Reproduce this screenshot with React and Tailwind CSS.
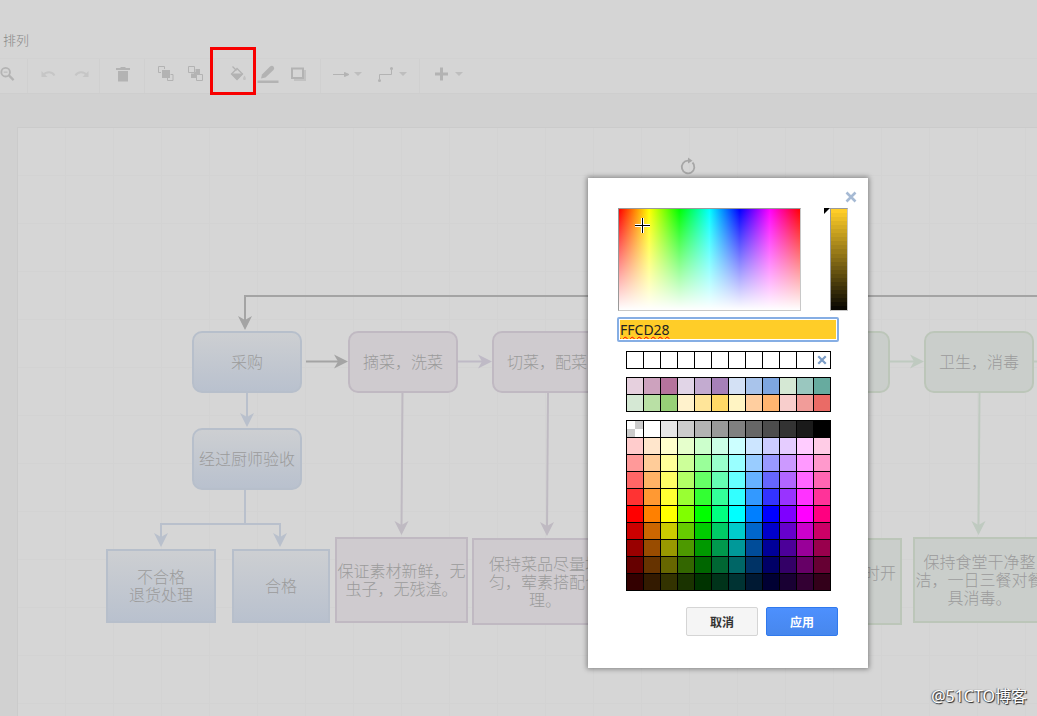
import React, { useState } from "react";

/* ---------------- DATA ---------------- */

const PRESETS = [
  "E6D0DE", "CDA2BE", "B5739D", "E1D5E7", "C3ABD0", "A680B8", "D4E1F5", "A9C4EB", "7EA6E0", "D5E8D4", "9AC7BF", "67AB9F",
  "D5E8D4", "B9E0A5", "97D077", "FFF2CC", "FFE599", "FFD966", "FFF4C3", "FFCE9F", "FFB570", "F8CECC", "F19C99", "EA6B66",
];

const PALETTE = [
  "none", "FFFFFF", "E6E6E6", "CCCCCC", "B3B3B3", "999999", "808080", "666666", "4D4D4D", "333333", "1A1A1A", "000000",
  "FFCCCC", "FFE6CC", "FFFFCC", "E6FFCC", "CCFFCC", "CCFFE6", "CCFFFF", "CCE5FF", "CCCCFF", "E5CCFF", "FFCCFF", "FFCCE6",
  "FF9999", "FFCC99", "FFFF99", "CCFF99", "99FF99", "99FFCC", "99FFFF", "99CCFF", "9999FF", "CC99FF", "FF99FF", "FF99CC",
  "FF6666", "FFB366", "FFFF66", "B3FF66", "66FF66", "66FFB3", "66FFFF", "66B2FF", "6666FF", "B266FF", "FF66FF", "FF66B3",
  "FF3333", "FF9933", "FFFF33", "99FF33", "33FF33", "33FF99", "33FFFF", "3399FF", "3333FF", "9933FF", "FF33FF", "FF3399",
  "FF0000", "FF8000", "FFFF00", "80FF00", "00FF00", "00FF80", "00FFFF", "007FFF", "0000FF", "7F00FF", "FF00FF", "FF0080",
  "CC0000", "CC6600", "CCCC00", "66CC00", "00CC00", "00CC66", "00CCCC", "0066CC", "0000CC", "6600CC", "CC00CC", "CC0066",
  "990000", "994C00", "999900", "4D9900", "009900", "00994D", "009999", "004C99", "000099", "4C0099", "990099", "99004D",
  "660000", "663300", "666600", "336600", "006600", "006633", "006666", "003366", "000066", "330066", "660066", "660033",
  "330000", "331A00", "333300", "1A3300", "003300", "00331A", "003333", "001933", "000033", "190033", "330033", "33001A",
];

const blue = "border-[#b7bfcb] bg-linear-to-b from-[#cdcfd2] to-[#b9c1ce]";
const purple = "border-[#c0b9c2] bg-[#cfcbcf]";
const green = "border-[#bcc6b9] bg-[#cacecb]";

// x / y are measured from the corner of the drawing sheet
const NODES = [
  { x: 174, y: 203, w: 110, h: 62, round: true, tone: blue, lines: ["采购"] },
  { x: 174, y: 300, w: 110, h: 62, round: true, tone: blue, lines: ["经过厨师验收"] },
  { x: 330, y: 203, w: 110, h: 62, round: true, tone: purple, lines: ["摘菜，洗菜"] },
  { x: 474, y: 203, w: 110, h: 62, round: true, tone: purple, lines: ["切菜，配菜"] },
  { x: 762, y: 203, w: 110, h: 62, round: true, tone: green, lines: [] },
  { x: 906, y: 203, w: 110, h: 62, round: true, tone: green, lines: ["卫生，消毒"] },
  { x: 88, y: 421, w: 110, h: 74, tone: blue, lines: ["不合格", "退货处理"] },
  { x: 214, y: 421, w: 98, h: 74, tone: blue, lines: ["合格"] },
  { x: 317, y: 409, w: 133, h: 86, tone: purple, lines: ["保证素材新鲜，无", "虫子，无残渣。"] },
  { x: 454, y: 410, w: 146, h: 87, tone: purple, lines: ["保持菜品尽量均", "匀，荤素搭配合", "理。"] },
  { x: 754, y: 410, w: 130, h: 87, tone: green, right: true, lines: ["时开", "\u00a0"] },
  { x: 895, y: 409, w: 133, h: 86, tone: green, lines: ["保持食堂干净整", "洁，一日三餐对餐", "具消毒。"] },
];

// each tip is [x, y, rotation] of an arrow head
const EDGES = [
  { d: "M1100 168H227V192", color: "#a4a4a4", tips: [[227, 202, 90]] },
  { d: "M288 233.5H320", color: "#a4a4a4", tips: [[330, 233.5, 0]] },
  { d: "M229 265V290", color: "#b9c0cc", tips: [[229, 299, 90]] },
  { d: "M227 362V396M143 410V396H262V410", color: "#b9c0cc", tips: [[143, 419, 90], [262, 419, 90]] },
  { d: "M440 233.5H464", color: "#bfbac6", tips: [[474, 233.5, 0]] },
  { d: "M384.5 265L383.5 398", color: "#bfbac2", tips: [[383.5, 407, 90]] },
  { d: "M530 265L529 399", color: "#bfbac2", tips: [[529, 408, 90]] },
  { d: "M872 233.5H896", color: "#bfcac0", tips: [[906, 233.5, 0]] },
  { d: "M961.5 265L960.5 398", color: "#bfcac0", tips: [[960.5, 407, 90]] },
  { d: "M1016 233.5H1040", color: "#bfcac0", tips: [] },
];

/* ---------------- ICONS ---------------- */

const Icon = ({ children, className = "text-[#b3b3b3]" }) => (
  <svg width="16" height="16" viewBox="0 0 16 16" fill="none" stroke="currentColor" className={className} aria-hidden="true">
    {children}
  </svg>
);

const ZoomOutIcon = () => (
  <Icon>
    <circle cx="6" cy="6" r="4.6" strokeWidth="2" />
    <path d="M4 6h4" strokeWidth="1" />
    <path d="M9.500 9.500l5 5" strokeWidth="2.4" />
  </Icon>
);

const UndoIcon = () => (
  <Icon className="text-[#c6c6c6]">
    <path d="M3.5 9C6 5.500 12 5 14.500 9.500" strokeWidth="2" />
    <path d="M1.500 5v6h6z" fill="currentColor" stroke="none" />
  </Icon>
);

const RedoIcon = () => (
  <Icon className="text-[#c6c6c6]">
    <path d="M12.500 9C10 5.500 4 5 1.500 9.500" strokeWidth="2" />
    <path d="M14.500 5v6h-6z" fill="currentColor" stroke="none" />
  </Icon>
);

const TrashIcon = () => (
  <Icon>
    <path d="M1 2h4l1-1h4l1 1h4v2H1zM3 5h10v10.500H3z" fill="currentColor" stroke="none" />
  </Icon>
);

const ToFrontIcon = () => (
  <Icon>
    <path d="M1.500 1.500H7V3H4V7H1.500zM14.500 14.500V9H13V13H9V14.500z" strokeWidth="0" />
    <path d="M3 6.500H0.500V0.500H6.500V3M9.500 12v2.500H15V8.500H12.500" />
    <path d="M4 4h8v8H4z" fill="currentColor" stroke="none" />
  </Icon>
);

const ToBackIcon = () => (
  <Icon>
    <path d="M7.500 3H12v5H7.500zM3 7.500h5.500V12H3zM6 6h4v4H6z" fill="currentColor" stroke="none" />
    <path d="M0.500 0.500h6v6h-6zM8.500 8.500h6v6h-6z" fill="#d5d5d5" />
  </Icon>
);

const FillIcon = () => (
  <Icon>
    <path d="M2.500 0.500l4 4" strokeWidth="1.300" />
    <path d="M7 2.500L1.500 8 7 13.500 12.500 8z" strokeWidth="1.300" />
    <path d="M1 7.500L7 14l6-6.500z" fill="currentColor" stroke="none" />
    <path d="M14.500 9.500c-2.500 3.500-1.500 4.500 0 4.500s2-1.500 0-4.500z" fill="#c2c2c2" stroke="none" />
  </Icon>
);

const LineColorIcon = () => (
  <svg width="22" height="18" viewBox="0 0 22 18" className="text-[#b3b3b3]" aria-hidden="true">
    <path d="M4 13.500l1-4L13 1.500q2-1.500 3.500 0t0 3.500L8.500 12.500z" fill="currentColor" />
    <path d="M0.500 15.500h21v2.500h-21z" fill="currentColor" />
  </svg>
);

const ShadowIcon = () => (
  <Icon>
    <path d="M4 4h12v11H4z" fill="#c2c2c2" stroke="none" />
    <path d="M2 2.500h11v9.500H2z" fill="#d5d5d5" strokeWidth="2" />
  </Icon>
);

const ArrowIcon = () => (
  <Icon>
    <path d="M0 8.500h13" />
    <path d="M11.500 6.500L16 8.500l-4.500 2z" fill="currentColor" />
  </Icon>
);

const ConnectorIcon = () => (
  <Icon>
    <path d="M1.500 13V8.500h12V4" />
    <circle cx="1.500" cy="14.500" r="1.500" fill="currentColor" stroke="none" />
    <circle cx="13.500" cy="2.500" r="1.500" fill="currentColor" stroke="none" />
  </Icon>
);

const PlusIcon = () => (
  <Icon>
    <path d="M7.500 1.500v13M1 8h13" strokeWidth="3" />
  </Icon>
);

const Caret = () => (
  <svg width="8" height="4" viewBox="0 0 8 4" className="text-[#bebebe]" aria-hidden="true">
    <path d="M0 0h8L4 4z" fill="currentColor" />
  </svg>
);

const CrossIcon = ({ size, className }) => (
  <svg width={size} height={size} viewBox="0 0 12 12" stroke="currentColor" className={className} aria-hidden="true">
    <path d="M1.500 1.500l9 9M10.500 1.500l-9 9" strokeWidth="2.600" />
  </svg>
);

/* ---------------- TOOLBAR ---------------- */

const ToolButton = ({ label, className = "w-[30px]", children }) => (
  <button
    type="button"
    aria-label={label}
    className={`relative flex h-[30px] shrink-0 items-center justify-center ${className}`}
  >
    {children}
  </button>
);

const MenuToolButton = ({ label, children }) => (
  <button type="button" aria-label={label} className="flex h-[30px] shrink-0 items-center gap-[5px]">
    {children}
    <Caret />
  </button>
);

const Group = ({ className, last, children }) => (
  <div className={`flex shrink-0 items-start ${last ? "" : "border-r border-[#d0d0d0]"} ${className}`}>
    {children}
  </div>
);

const Toolbar = () => (
  <div className="flex h-9 border-y border-t-[#d2d2d2] border-b-[#cecece] bg-[#d5d5d5]">
    <Group className="pr-3">
      <ToolButton label="缩小" className="w-[15px]"><ZoomOutIcon /></ToolButton>
    </Group>
    <Group className="pl-[3px]">
      <ToolButton label="撤销" className="w-[34px]"><UndoIcon /></ToolButton>
      <ToolButton label="重做" className="w-[34px]"><RedoIcon /></ToolButton>
    </Group>
    <Group className="pl-[9px] pr-[7px]">
      <ToolButton label="删除" className="w-7"><TrashIcon /></ToolButton>
    </Group>
    <Group className="pl-1.5 pr-[3px]">
      <ToolButton label="移至最前"><ToFrontIcon /></ToolButton>
      <ToolButton label="移至最后"><ToBackIcon /></ToolButton>
    </Group>
    <Group className="pl-2 pr-[7px]">
      <ToolButton label="填充颜色">
        <FillIcon />
        <span className="absolute -left-[13px] -top-3 h-12 w-[46px] border-3 border-[#f80000]" />
      </ToolButton>
      <ToolButton label="线条颜色"><LineColorIcon /></ToolButton>
      <ToolButton label="阴影"><ShadowIcon /></ToolButton>
    </Group>
    <Group className="gap-4 px-3">
      <MenuToolButton label="连接"><ArrowIcon /></MenuToolButton>
      <MenuToolButton label="航点"><ConnectorIcon /></MenuToolButton>
    </Group>
    <Group last className="pl-[14px]">
      <MenuToolButton label="插入"><PlusIcon /></MenuToolButton>
    </Group>
  </div>
);

/* ---------------- DIAGRAM ---------------- */

const Node = ({ node }) => (
  <div
    className={`absolute flex flex-col justify-center overflow-hidden whitespace-nowrap border-2 pb-0.5 text-base leading-[18px] font-light text-[#9b9b9b] ${
      node.round ? "rounded-[10px]" : ""
    } ${node.right ? "items-end pr-1" : "items-center"} ${node.tone}`}
    style={{ left: node.x, top: node.y, width: node.w, height: node.h }}
  >
    {node.lines.map((line) => (
      <span key={line}>{line}</span>
    ))}
  </div>
);

const Sheet = () => (
  <div className="relative flex-1 overflow-hidden border-l border-t border-[#cbcbcb] bg-[#d6d6d6] bg-[linear-gradient(to_right,#d3d3d3_1px,transparent_1px),linear-gradient(to_bottom,#d3d3d3_1px,transparent_1px)] bg-size-[48px_48px] bg-position-[-1px_-1px]">
    {NODES.map((node) => (
      <Node key={`${node.x}-${node.y}`} node={node} />
    ))}
    <svg className="absolute inset-0 size-full" aria-hidden="true">
      {EDGES.map((edge) => (
        <g key={edge.d}>
          <path d={edge.d} fill="none" stroke={edge.color} strokeWidth="2" />
          {edge.tips.map(([x, y, angle]) => (
            <path
              key={x}
              d="M0 0L-14 -7L-10 0L-14 7Z"
              fill={edge.color}
              transform={`translate(${x} ${y}) rotate(${angle})`}
            />
          ))}
        </g>
      ))}
      {/* rotate handle */}
      <g transform="translate(670 39)" stroke="#a6a6a6" fill="none">
        <path d="M4.500 -4.500A6.300 6.300 0 1 1 0 -6.300" strokeWidth="1.800" />
        <path d="M0 -9.500L4.500 -6.300L0 -3.500z" fill="#a6a6a6" stroke="none" />
      </g>
    </svg>
  </div>
);

/* ---------------- COLOR DIALOG ---------------- */

const Swatches = ({ colors, onPick }) => (
  <div className="grid grid-cols-[repeat(12,16px)] gap-px bg-black p-px">
    {colors.map((color, i) =>
      color === "none" ? (
        <button
          key={i}
          type="button"
          aria-label="无"
          className="h-4 bg-[conic-gradient(#cbcbcb_25%,#fff_25%_50%,#cbcbcb_50%_75%,#fff_75%)]"
        />
      ) : (
        <button
          key={i}
          type="button"
          aria-label={color}
          onClick={() => onPick(color)}
          className="h-4"
          style={{ backgroundColor: `#${color}` }}
        />
      )
    )}
  </div>
);

const ColorDialog = () => {
  const [color, setColor] = useState("FFCD28");
  const steps = Array.from({ length: 25 }, (_, i) => 1 - i / 25);

  return (
    <div
      role="dialog"
      aria-label="颜色"
      className="absolute left-[588px] top-[178px] w-[280px] bg-white px-[30px] pb-8 pt-[30px] shadow-[0_0_5px_1px_rgba(0,0,0,0.4)]"
    >
      <button type="button" aria-label="关闭" className="absolute right-[11px] top-[13px] text-[#a6bad4]">
        <CrossIcon size={12} />
      </button>

      <div className="flex justify-between">
        <div className="relative h-[103px] w-[183px] border border-[#c8c8c8] border-l-[#999] border-t-[#999] bg-[linear-gradient(to_bottom,transparent,#fff),linear-gradient(to_right,#f00,#ff0,#0f0,#0ff,#00f,#f0f,#f00)]">
          <svg width="15" height="15" viewBox="0 0 15 15" className="absolute left-4 top-[9px]" aria-hidden="true">
            <path d="M7.500 0v15M0 7.500h15" stroke="#fff" strokeWidth="3" />
            <path d="M7.500 0v15M0 7.500h15" stroke="#000" strokeWidth="1" />
          </svg>
        </div>
        <div className="-mr-[10px] flex">
          <svg width="6" height="6" viewBox="0 0 6 6" aria-hidden="true">
            <path d="M0 0h6L0 6z" fill="#000" />
          </svg>
          <div className="flex h-[103px] w-[18px] flex-col border border-[#c8c8c8] border-l-[#999] border-t-[#999]">
            {steps.map((v) => (
              <span
                key={v}
                className="flex-1"
                style={{ backgroundColor: `rgb(${Math.round(255 * v)} ${Math.round(205 * v)} ${Math.round(40 * v)})` }}
              />
            ))}
          </div>
        </div>
      </div>

      <input
        aria-label="颜色值"
        value={color}
        onChange={(e) => setColor(e.target.value)}
        className="mt-1.5 -ml-px block h-[25px] w-[222px] rounded-xs border-2 border-[#86aee4] bg-[#ffcd28] bg-clip-content p-px font-['Noto_Sans','Noto_Sans_CJK_SC',sans-serif] text-sm text-[#222] underline decoration-[#f00] decoration-wavy decoration-1 underline-offset-1 outline-none"
      />

      <div className="mt-[9px] flex flex-col items-start gap-2 pl-2">
        <div className="grid grid-cols-[repeat(12,16px)] gap-px bg-black p-px">
          {Array.from({ length: 11 }, (_, i) => (
            <button key={i} type="button" aria-label="最近使用" className="h-4 bg-white" />
          ))}
          <button type="button" aria-label="重置" className="flex h-4 items-center justify-center bg-white text-[#7a9cc6]">
            <CrossIcon size={10} />
          </button>
        </div>
        <Swatches colors={PRESETS} onPick={setColor} />
        <Swatches colors={PALETTE} onPick={setColor} />
      </div>

      <div className="mt-4 flex justify-end gap-2 text-xs font-bold">
        <button type="button" className="h-[29px] w-[72px] rounded-xs border border-[#d5d5d5] bg-[#f5f5f5] text-[#333]">
          取消
        </button>
        <button
          type="button"
          className="h-[29px] w-[72px] rounded-xs border border-[#3079ed] bg-linear-to-b from-[#4d90fe] to-[#4787ed] text-white"
        >
          应用
        </button>
      </div>
    </div>
  );
};

/* ---------------- APP ---------------- */

const App = () => (
  <div className="relative flex min-h-screen flex-col overflow-hidden bg-[#d1d1d1] font-['Noto_Sans_CJK_SC',sans-serif]">
    <nav className="flex bg-[#d5d5d5] pb-2 pl-[3px] pt-[30px]">
      <button type="button" className="text-[13px] leading-5 font-light text-[#888]">排列</button>
    </nav>
    <Toolbar />
    <main className="flex flex-1 flex-col pl-[17px] pt-[33px]">
      <Sheet />
    </main>
    <ColorDialog />
    <div className="absolute bottom-2 right-[10px] font-['Noto_Sans','Noto_Sans_CJK_SC',sans-serif] text-base leading-6 text-white [text-shadow:1px_1px_1px_#222,-1px_0_1px_#666]">
      @51CTO博客
    </div>
  </div>
);

export default App;
